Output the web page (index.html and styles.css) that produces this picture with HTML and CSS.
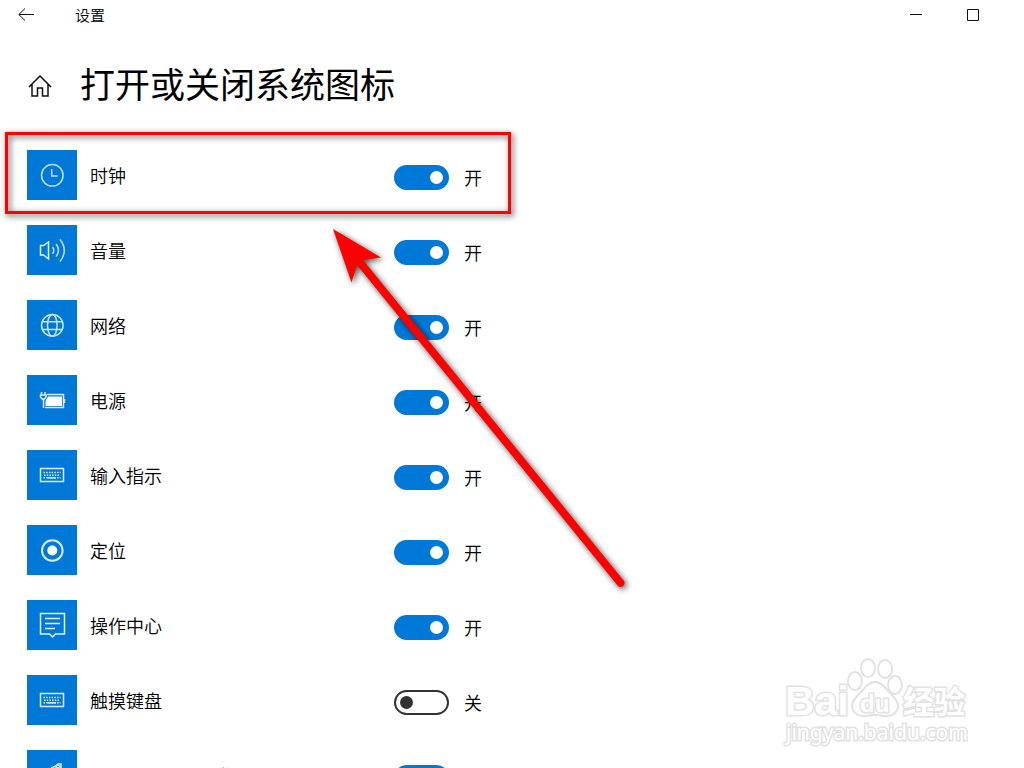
FILE: index.html
```html
<!DOCTYPE html>
<html lang="zh-CN">
<head>
  <meta charset="UTF-8" />
  <meta name="viewport" content="width=device-width, initial-scale=1.0"/>
  <title>设置</title>
  <link rel="stylesheet" href="styles.css">
</head>
<body>
  <header class="titlebar">
    <button class="back" aria-label="返回">
      <svg width="16" height="14" viewBox="0 0 16 14"><path d="M7 .5L.8 6.500l6.200 6M1 6.500h15"/></svg>
    </button>
    <span class="app-name">设置</span>
    <div class="window-buttons">
      <button aria-label="最小化"><svg width="12" height="12" viewBox="0 0 12 12"><path d="M0 5.500h12"/></svg></button>
      <button aria-label="最大化"><svg width="12" height="12" viewBox="0 0 12 12"><path d="M.5.5h11v11H.5z"/></svg></button>
    </div>
  </header>

  <main>
    <div class="heading">
      <a class="home" href="#" aria-label="主页">
        <svg width="24" height="22" viewBox="0 0 24 22"><path d="M1 12L12 1l11 11M4 9.500V21h5.500v-8h5v8H20V9.500"/></svg>
      </a>
      <h1>打开或关闭系统图标</h1>
    </div>

    <ul class="icon-list">
      <li class="item">
        <span class="tile"><svg viewBox="0 0 50 50"><g opacity=".75"><circle cx="25.300" cy="25.300" r="10.800"/><path d="M24.700 19v7h6"/></g></svg></span>
        <label for="clock">时钟</label>
        <input class="switch" type="checkbox" id="clock" checked>
        <span class="state">开</span>
        <div class="highlight"></div>
      </li>
      <li class="item">
        <span class="tile"><svg viewBox="0 0 50 50"><path d="M13.500 20.500h3l5-3.500v17l-5-4h-3z" opacity=".9"/><g opacity=".75"><path d="M25.500 22q2.600 3.400 0 6.800M29 19q5 6.300 0 12.600M33 14.500q8.600 11 0 22"/></g></svg></span>
        <label for="volume">音量</label>
        <input class="switch" type="checkbox" id="volume" checked>
        <span class="state">开</span>
      </li>
      <li class="item">
        <span class="tile"><svg viewBox="0 0 50 50"><g opacity=".8"><circle cx="25.300" cy="25.300" r="10.800"/><ellipse cx="25.300" cy="25.300" rx="4.800" ry="10.800"/><path d="M15.500 21.700h19.600M15.500 29.500h19.600"/></g></svg></span>
        <label for="network">网络</label>
        <input class="switch" type="checkbox" id="network" checked>
        <span class="state">开</span>
      </li>
      <li class="item">
        <span class="tile"><svg viewBox="0 0 50 50"><g opacity=".85"><path d="M14.500 17v3M18 17v3M13.500 20h5.500v2l-1.500 2h-2.500l-1.500-2zM16.500 24v9M20 19.500h16.500v13H18M37.500 24v4"/></g><path class="solid" d="M21 21.500h14v9.500H18.500v-5z"/></svg></span>
        <label for="power">电源</label>
        <input class="switch" type="checkbox" id="power" checked>
        <span class="state">开</span>
      </li>
      <li class="item">
        <span class="tile"><svg viewBox="0 0 50 50"><g opacity=".85"><path d="M13.500 18.500h23v13h-23z"/><path stroke-dasharray="1.500 1.200" d="M16.500 22.500h17M17 25.200h16M16.500 27.800h17"/><path d="M20.500 27.800h8.500"/></g></svg></span>
        <label for="input">输入指示</label>
        <input class="switch" type="checkbox" id="input" checked>
        <span class="state">开</span>
      </li>
      <li class="item">
        <span class="tile"><svg viewBox="0 0 50 50"><circle cx="25.300" cy="25.500" r="10.300" stroke-width="2" opacity=".85"/><circle class="solid" cx="25.300" cy="25.500" r="5"/></svg></span>
        <label for="location">定位</label>
        <input class="switch" type="checkbox" id="location" checked>
        <span class="state">开</span>
      </li>
      <li class="item">
        <span class="tile"><svg viewBox="0 0 50 50"><path d="M13.500 13.500h24v20.500h-9l-3 3-3-3h-9zM18 18.500h15M18 23.500h15M18 28.500h10" opacity=".9"/></svg></span>
        <label for="action">操作中心</label>
        <input class="switch" type="checkbox" id="action" checked>
        <span class="state">开</span>
      </li>
      <li class="item">
        <span class="tile"><svg viewBox="0 0 50 50"><g opacity=".85"><path d="M13.500 18.500h23v13h-23z"/><path stroke-dasharray="1.500 1.200" d="M16.500 22.500h17M17 25.200h16M16.500 27.800h17"/><path d="M20.500 27.800h8.500"/></g></svg></span>
        <label for="touch">触摸键盘</label>
        <input class="switch" type="checkbox" id="touch">
        <span class="state">关</span>
      </li>
      <li class="item">
        <span class="tile"><svg viewBox="0 0 50 50"><g opacity=".85"><path d="M24 18l4-1.500 3-2.500h3v4l-4 8-8 8M28 16.500l5 2M30.500 14.500l3 2.500"/></g></svg></span>
        <label for="ink">Windows Ink 工作区</label>
        <input class="switch" type="checkbox" id="ink" checked>
        <span class="state">开</span>
      </li>
    </ul>
  </main>

  <svg class="arrow" width="320" height="380" viewBox="0 0 320 380">
    <path d="M13 9l48 28.500-18 2.500L304 361a4 4 0 0 1-6 5L37 45l-5.500 17.500z"/>
  </svg>

  <svg class="watermark" width="200" height="100" viewBox="0 0 200 100">
    <ellipse cx="73" cy="31" rx="7" ry="9"/>
    <ellipse cx="86" cy="18" rx="7" ry="9"/>
    <ellipse cx="103" cy="19" rx="7" ry="9"/>
    <ellipse cx="113" cy="35" rx="7" ry="9"/>
    <path d="M93 32c7 0 10 6 14 10s9 8 9 14-5 10-11 10-7-1-12-1-7 1-12 1-11-4-11-10 5-10 9-14 7-10 14-10z"/>
    <text class="brand" x="3" y="65">Bai</text>
    <text class="du" x="78" y="62">du</text>
    <text class="brand-cn" x="121" y="63">经验</text>
    <text class="site" x="4" y="90">jingyan.baidu.com</text>
  </svg>
</body>
</html>
```
FILE: styles.css
```css
* {
    box-sizing: border-box;
    margin: 0;
    padding: 0;
}
body {
    position: relative;
    height: 100vh;
    overflow: hidden;
    background: #fff;
    color: #000;
    font-family: "Noto Sans CJK SC", sans-serif;
    font-size: 18px;
    font-weight: 350;
}

button {
    border: none;
    background: none;
}

svg {
    display: block;
    fill: none;
    stroke: #111;
}

.titlebar {
    display: flex;
    align-items: center;
    height: 30px;
    padding-right: 23px;
}

.back {
    width: 75px;
    height: 30px;
    padding-left: 18px;
}

.app-name {
    padding-bottom: 2px;
    font-size: 15px;
}

.window-buttons {
    display: flex;
    margin-left: auto;
}

.window-buttons button {
    display: flex;
    justify-content: center;
    align-items: center;
    width: 57px;
    height: 30px;
}

.heading {
    display: flex;
    align-items: center;
    height: 60px;
    margin: 25px 0 35px 28px;
}

.home {
    width: 52px;
    padding-top: 2px;
}

.home svg {
    stroke-width: 1.5;
}

h1 {
    padding-bottom: 5px;
    font-size: 35px;
    font-weight: 400;
}

.icon-list {
    display: grid;
    gap: 25px;
    padding-left: 27px;
    list-style: none;
}

.item {
    position: relative;
    display: grid;
    grid-template-columns: 50px 291px 55px 1fr;
    column-gap: 13px;
    align-items: center;
    height: 50px;
}

.tile {
    width: 50px;
    height: 50px;
    background: #0078d7;
}

.tile svg {
    stroke: #fff;
    stroke-width: 1.5;
}

.tile .solid {
    fill: #fff;
    stroke: none;
}

.switch {
    appearance: none;
    position: relative;
    justify-self: end;
    width: 55px;
    height: 25px;
    margin-top: 5px;
    border: 2px solid #333;
    border-radius: 13px;
}

.switch::before {
    content: "";
    position: absolute;
    top: 4px;
    left: 4px;
    width: 13px;
    height: 13px;
    border-radius: 50%;
    background: #333;
}

.switch:checked {
    border-color: #0078d7;
    background: #0078d7;
}

.switch:checked::before {
    left: 34px;
    background: #fff;
}

.state {
    margin-top: 4px;
    padding-left: 2px;
}

.highlight {
    position: absolute;
    top: -18px;
    left: -22px;
    width: 506px;
    height: 82px;
    border: 3px solid #f00;
    filter: drop-shadow(2px 2px 3px rgba(0,0,0,0.7));
    pointer-events: none;
}

.arrow {
    position: absolute;
    top: 220px;
    left: 320px;
    fill: #f00;
    stroke: none;
    filter: drop-shadow(2px 2px 3px rgba(0,0,0,0.7));
    pointer-events: none;
}

.watermark {
    position: absolute;
    right: 42px;
    bottom: 18px;
    fill: #fff;
    stroke: #e2e2e2;
    stroke-width: 2;
    pointer-events: none;
}

.watermark text {
    paint-order: stroke;
    stroke-width: 3;
}

.brand {
    font-family: "Liberation Sans", sans-serif;
    font-size: 41px;
    font-weight: bold;
}

.du {
    font-family: "Liberation Sans", sans-serif;
    font-size: 24px;
    font-weight: bold;
}

.brand-cn {
    font-size: 31px;
    font-weight: 700;
}

.site {
    font-family: "Noto Sans", sans-serif;
    font-size: 21px;
    font-weight: 400;
}
```
